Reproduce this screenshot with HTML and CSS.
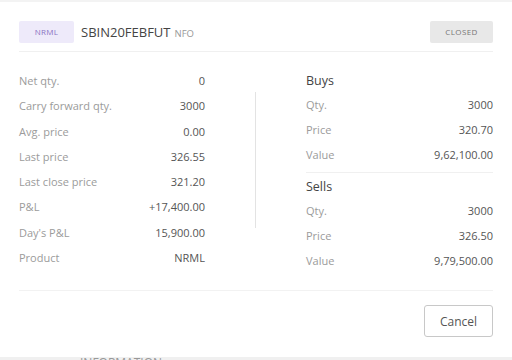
FILE: index.html
```html
<!DOCTYPE html>
<html>
<head>
<meta charset="utf-8">
<link rel="stylesheet" href="styles.css">
</head>
<body>
<div class="topstrip"></div>
<div class="modal">
  <div class="header">
    <span class="badge-product">NRML</span>
    <span class="symbol">SBIN20FEBFUT</span>
    <span class="exchange">NFO</span>
    <span class="badge-status">CLOSED</span>
  </div>
  <div class="content">
    <div class="col-left">
      <div class="row"><span class="label">Net qty.</span><span class="value">0</span></div>
      <div class="row"><span class="label">Carry forward qty.</span><span class="value">3000</span></div>
      <div class="row"><span class="label">Avg. price</span><span class="value">0.00</span></div>
      <div class="row"><span class="label">Last price</span><span class="value">326.55</span></div>
      <div class="row"><span class="label">Last close price</span><span class="value">321.20</span></div>
      <div class="row"><span class="label">P&amp;L</span><span class="value">+17,400.00</span></div>
      <div class="row"><span class="label">Day's P&amp;L</span><span class="value">15,900.00</span></div>
      <div class="row"><span class="label">Product</span><span class="value">NRML</span></div>
    </div>
    <div class="divider"></div>
    <div class="col-right">
      <div class="section">
        <div class="heading">Buys</div>
        <div class="row"><span class="label">Qty.</span><span class="value">3000</span></div>
        <div class="row"><span class="label">Price</span><span class="value">320.70</span></div>
        <div class="row"><span class="label">Value</span><span class="value">9,62,100.00</span></div>
      </div>
      <div class="section sells">
        <div class="heading">Sells</div>
        <div class="row"><span class="label">Qty.</span><span class="value">3000</span></div>
        <div class="row"><span class="label">Price</span><span class="value">326.50</span></div>
        <div class="row"><span class="label">Value</span><span class="value">9,79,500.00</span></div>
      </div>
    </div>
  </div>
  <div class="footer">
    <button class="btn-cancel">Cancel</button>
  </div>
</div>
<div class="bottomstrip"><span class="under">INFORMATION</span></div>
</body>
</html>
```
FILE: styles.css
```css
html, body {
  margin: 0;
  padding: 0;
}
body {
  width: 512px;
  height: 360px;
  overflow: hidden;
  background: #f2f2f2;
  font-family: "Open Sans", "Noto Sans", sans-serif;
  color: #444;
}
.topstrip {
  height: 2px;
  background: #f3f3f3;
}
.modal {
  background: #fff;
  height: 355px;
  padding: 0 19px;
  box-sizing: border-box;
}
.header {
  display: flex;
  align-items: center;
  padding: 19px 0 8px;
  border-bottom: 1px solid #f0f0f0;
}
.badge-product {
  width: 55px;
  height: 22px;
  line-height: 22px;
  text-align: center;
  background: #eeeafa;
  color: #8a72c2;
  font-size: 8px;
  letter-spacing: 0.3px;
  border-radius: 2px;
}
.symbol {
  margin-left: 7px;
  font-size: 13px;
  color: #444;
}
.exchange {
  margin-left: 4px;
  font-size: 9.5px;
  color: #999;
  padding-top: 2px;
}
.badge-status {
  margin-left: auto;
  width: 63px;
  height: 22px;
  line-height: 22px;
  text-align: center;
  background: #e8e8e8;
  color: #777;
  font-size: 8px;
  letter-spacing: 0.4px;
  border-radius: 2px;
}
.content {
  display: flex;
  align-items: flex-start;
  padding: 16px 0 17px;
  border-bottom: 1px solid #f2f2f2;
}
.col-left {
  width: 186px;
}
.divider {
  width: 1px;
  height: 136px;
  margin: 24px 0 0 50px;
  background: #e3e3e3;
}
.col-right {
  flex: 1;
  margin-left: 50px;
  margin-top: 2px;
}
.row {
  display: flex;
  justify-content: space-between;
  height: 25.3px;
  line-height: 25.3px;
  font-size: 11px;
}
.col-right .row {
  height: 25px;
  line-height: 25px;
}
.label {
  color: #9b9b9b;
}
.value {
  color: #555;
}
.heading {
  height: 22px;
  line-height: 22px;
  font-size: 12.5px;
  color: #444;
}
.sells {
  margin-top: 5px;
  border-top: 1px solid #f0f0f0;
  padding-top: 3px;
}
.footer {
  display: flex;
  justify-content: flex-end;
  padding-top: 14px;
}
.btn-cancel {
  width: 69px;
  height: 32px;
  background: #fff;
  border: 1px solid #c8c8c8;
  border-radius: 3px;
  font-family: "Open Sans", "Noto Sans", sans-serif;
  font-size: 12px;
  color: #555;
  padding: 0;
}
.bottomstrip {
  height: 3px;
  overflow: hidden;
  background: #f0f0f0;
  padding-left: 80px;
}
.under {
  display: block;
  font-size: 12px;
  line-height: 12px;
  color: #999;
}
```
